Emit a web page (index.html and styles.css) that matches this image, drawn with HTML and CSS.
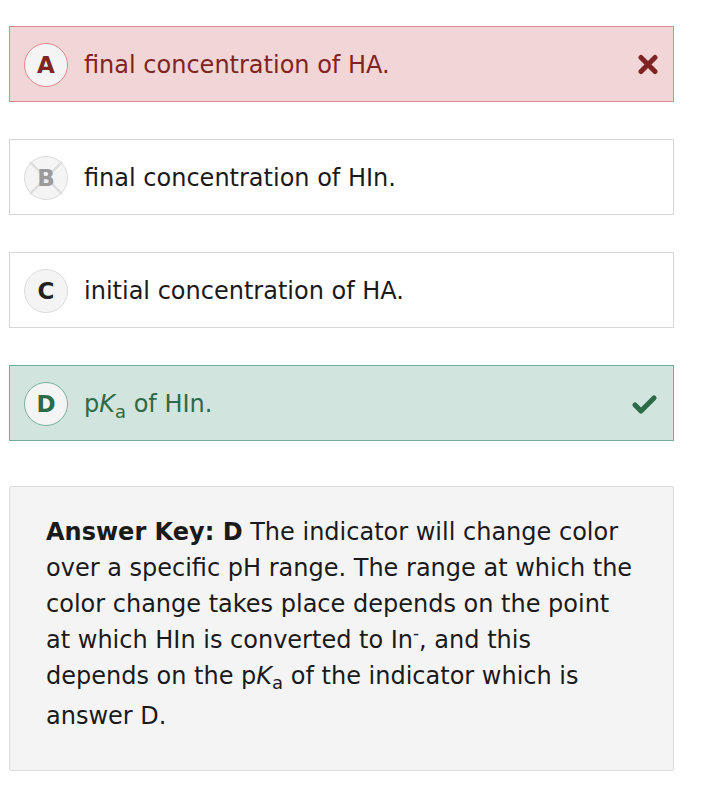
FILE: index.html
```html
<!DOCTYPE html>
<html>
<head>
<meta charset="utf-8">
<link rel="stylesheet" href="styles.css">
</head>
<body>
<div class="page">
  <div class="options">
    <div class="option wrong">
      <span class="badge">A</span>
      <span class="label">final concentration of HA.</span>
      <svg class="mark" width="22" height="21" viewBox="0 0 22 21"><path d="M4 3.5 L18 17.5 M18 3.5 L4 17.5" stroke="#7f2424" stroke-width="5" stroke-linecap="round"/></svg>
    </div>
    <div class="option">
      <span class="badge struck">
        <svg class="strike" width="44" height="44" viewBox="0 0 44 44"><path d="M6 6 L38 38 M38 6 L6 38" stroke="#dddddd" stroke-width="2.4"/></svg>
        <span class="letter">B</span>
      </span>
      <span class="label">final concentration of HIn.</span>
    </div>
    <div class="option">
      <span class="badge">C</span>
      <span class="label">initial concentration of HA.</span>
    </div>
    <div class="option right">
      <span class="badge">D</span>
      <span class="label">p<i>K</i><sub>a</sub> of HIn.</span>
      <svg class="mark" width="28" height="22" viewBox="0 0 28 22"><path d="M4 12 L10 18 L23 5" stroke="#2c6b48" stroke-width="5.2" fill="none" stroke-linecap="round" stroke-linejoin="round"/></svg>
    </div>
  </div>
  <div class="answer">
    <p><b>Answer Key: D</b> The indicator will change color over a specific pH range. The range at which the color change takes place depends on the point at which HIn is converted to In<sup>-</sup>, and this depends on the p<i>K</i><sub>a</sub> of the indicator which is answer D.</p>
  </div>
</div>
</body>
</html>
```
FILE: styles.css
```css
html, body {
  margin: 0;
  padding: 0;
  background: #ffffff;
}
body {
  font-family: "DejaVu Sans", Verdana, sans-serif;
  color: #1a1a1a;
}
.page {
  width: 665px;
  padding: 26px 0 0 9px;
}
.options {
  display: flex;
  flex-direction: column;
  gap: 37px;
}
.option {
  box-sizing: border-box;
  height: 76px;
  display: flex;
  align-items: center;
  padding: 1px 14px 0 14px;
  border: 1px solid #d6d6d6;
  background: #ffffff;
  font-size: 24px;
  color: #1a1a1a;
}
.badge {
  position: relative;
  box-sizing: border-box;
  flex: 0 0 44px;
  width: 44px;
  height: 44px;
  border-radius: 50%;
  border: 1px solid #dcdcdc;
  background: #f4f4f4;
  display: flex;
  align-items: center;
  justify-content: center;
  font-weight: bold;
  font-size: 23px;
  color: #222;
}
.badge.struck {
  color: #9a9a9a;
}
.strike {
  position: absolute;
  left: -1px;
  top: -1px;
}
.letter {
  position: relative;
}
.label {
  margin-left: 16px;
  flex: 1;
}
.label sub {
  font-size: 0.75em;
  vertical-align: -0.35em;
  line-height: 0;
}
.answer sub {
  display: inline-block;
  font-size: 0.75em;
  line-height: 18px;
  vertical-align: -0.3em;
  margin-bottom: 6px;
}
.answer sup {
  font-size: 0.7em;
  vertical-align: 0.55em;
  line-height: 0;
}
.mark {
  flex: 0 0 auto;
}
.wrong {
  background: #f2d5d7;
  border-color: #dd8a8e;
  color: #7f2424;
}
.wrong .badge {
  border-color: #e3898c;
  color: #7f2424;
}
.right {
  background: #d2e4de;
  border-color: #76ad98;
  color: #2c6b48;
}
.right .badge {
  border-color: #7cb29d;
  color: #2c6b48;
}
.answer {
  box-sizing: border-box;
  margin-top: 45px;
  height: 285px;
  border: 1px solid #dcdcdc;
  border-radius: 2px;
  background: #f4f4f4;
  padding: 27px 38px 0 36px;
  font-size: 24px;
  line-height: 36px;
  color: #1a1a1a;
}
.answer p {
  margin: 0;
}
```
